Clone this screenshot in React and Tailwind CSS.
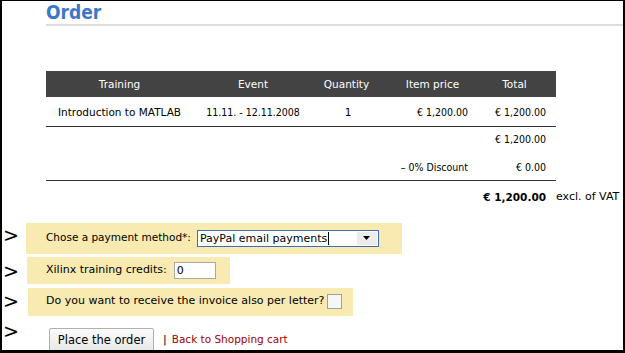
import { useState } from 'react'

const FONT = { fontFamily: '"DejaVu Sans", Verdana, sans-serif' }

function Arrow({ className = '' }) {
  return <span className={`w-[24px] shrink-0 pl-[1px] text-[19px] leading-none text-black ${className}`}>&gt;</span>
}

export default function App() {
  const [credits, setCredits] = useState('0')
  const [letter, setLetter] = useState(false)

  return (
    <div
      className="w-[625px] h-[353px] overflow-hidden bg-white border-black border-l-2 border-r-2 border-t border-b-[3px] text-black"
      style={FONT}
    >
      {/* Title */}
      <div className="pl-[44px]">
        <h1 className="text-[19px] font-bold leading-[22px] text-[#3b78c8] [font-stretch:condensed]">Order</h1>
        <div className="mt-[1px] h-[2px] bg-[#dddddd]" />
      </div>

      {/* Order table */}
      <div className="mt-[45px] ml-[44px] w-[510px] text-[10.5px]">
        <table className="w-full border-collapse table-fixed">
          <colgroup>
            <col className="w-[147px]" />
            <col className="w-[120px]" />
            <col className="w-[67px]" />
            <col className="w-[105px]" />
            <col className="w-[71px]" />
          </colgroup>
          <thead>
            <tr className="h-[26px] bg-[#434343] text-white">
              <th className="font-normal text-center pt-[1px]">Training</th>
              <th className="font-normal text-center pt-[1px]">Event</th>
              <th className="font-normal text-center pt-[1px]">Quantity</th>
              <th className="font-normal text-center pt-[1px]">Item price</th>
              <th className="font-normal text-center pt-[1px] pr-[12px]">Total</th>
            </tr>
          </thead>
          <tbody>
            <tr className="h-[29px] border-b border-[#333]">
              <td className="text-center pt-[3px]">Introduction to MATLAB</td>
              <td className="text-center pt-[3px] [font-stretch:condensed]">11.11. - 12.11.2008</td>
              <td className="text-center pt-[3px] pl-[3px]">1</td>
              <td className="text-right pt-[3px] pr-[17px] [font-stretch:condensed]">€ 1,200.00</td>
              <td className="text-right pt-[3px] pr-[10px] [font-stretch:condensed]">€ 1,200.00</td>
            </tr>
            <tr className="h-[27px]">
              <td colSpan={4} />
              <td className="text-right pr-[10px] [font-stretch:condensed]">€ 1,200.00</td>
            </tr>
            <tr className="h-[27px] border-b border-[#333]">
              <td colSpan={3} />
              <td className="text-right pt-[4px] pr-[17px] [font-stretch:condensed]">– 0% Discount</td>
              <td className="text-right pt-[4px] pr-[10px] [font-stretch:condensed]">€ 0.00</td>
            </tr>
          </tbody>
        </table>
        <div className="flex h-[33px] items-center pt-[1px]">
          <div className="w-[500px] shrink-0 text-right font-bold">€ 1,200.00</div>
          <div className="ml-[10px] whitespace-nowrap text-[11px]">excl. of VAT</div>
        </div>
      </div>

      {/* Payment form */}
      <div className="mt-[9px] flex flex-col text-[11px]">
        <div className="flex items-center">
          <Arrow className="mb-[6px]" />
          <div className="flex h-[31px] w-[376px] items-center bg-[#f8eab0] pl-[20px]">
            <span className="text-[10.5px]">Chose a payment method*:</span>
            <div className="ml-[6px] flex h-[17px] w-[182px] items-center border border-[#3c6eb4] bg-white">
              <span className="pl-[2px] text-[11px] leading-none">PayPal email payments</span>
              <span className="ml-[1px] h-[13px] w-[1px] bg-black" />
              <span className="flex-1" />
              <span className="mr-[1px] flex h-[13px] w-[20px] items-center justify-center bg-[#ececec]">
                <svg width="7" height="4" viewBox="0 0 7 4">
                  <path d="M0 0h7L3.5 4z" fill="#000" />
                </svg>
              </span>
            </div>
          </div>
        </div>

        <div className="mt-[3px] flex items-center">
          <Arrow className="mt-[3px]" />
          <div className="ml-[1px] flex h-[27px] w-[203px] items-center bg-[#f8eab0] pl-[19px]">
            <span>Xilinx training credits:</span>
            <input
              value={credits}
              onChange={(e) => setCredits(e.target.value)}
              className="ml-[7px] h-[17px] w-[42px] border border-[#a9a9a9] bg-white px-[2px] text-[11px] outline-none"
              style={FONT}
            />
          </div>
        </div>

        <div className="mt-[4px] flex items-center">
          <Arrow />
          <div className="ml-[2px] flex h-[28px] w-[325px] items-center bg-[#f8eab0] pl-[18px]">
            <span>Do you want to receive the invoice also per letter?</span>
            <button
              onClick={() => setLetter(!letter)}
              className="ml-[3px] h-[15px] w-[15px] border border-[#a0a0a0] bg-[#f6f6f6] text-[10px] leading-none"
            >
              {letter ? '✓' : ''}
            </button>
          </div>
        </div>

        <div className="mt-[12px] flex items-start">
          <Arrow className="-mt-[6px]" />
          <button className="ml-[23px] h-[26px] w-[105px] rounded-[2px] border border-[#b0b0b0] bg-gradient-to-b from-[#fbfbfb] to-[#e6e6e6] text-[11.5px]">
            Place the order
          </button>
          <span className="ml-[9px] mt-[4px] text-[11px] text-black">|</span>
          <a href="#" className="ml-[5px] mt-[4px] text-[10.5px] text-[#a30000]">Back to Shopping cart</a>
        </div>
      </div>
    </div>
  )
}
